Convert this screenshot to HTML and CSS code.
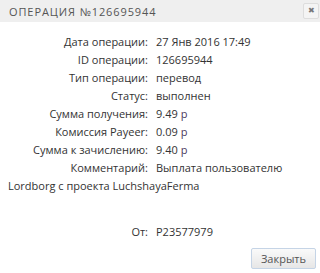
FILE: index.html
```html
<!DOCTYPE html>
<html lang="ru">
<head>
  <meta charset="UTF-8" />
  <title>Операция №126695944</title>
  <link rel="stylesheet" href="styles.css">
</head>
<body>
  <div class="dialog">
    <div class="dialog-head">
      <span class="dialog-title">Операция №126695944</span>
      <button class="dialog-close" title="Закрыть">&#10006;</button>
    </div>

    <div class="dialog-body">
      <div class="row"><span class="label">Дата операции:</span><span class="value">27 Янв 2016 17:49</span></div>
      <div class="row"><span class="label">ID операции:</span><span class="value">126695944</span></div>
      <div class="row"><span class="label">Тип операции:</span><span class="value">перевод</span></div>
      <div class="row"><span class="label">Статус:</span><span class="value">выполнен</span></div>
      <div class="row"><span class="label">Сумма получения:</span><span class="value">9.49 <span class="cur">р</span></span></div>
      <div class="row"><span class="label">Комиссия Payeer:</span><span class="value">0.09 <span class="cur">р</span></span></div>
      <div class="row"><span class="label">Сумма к зачислению:</span><span class="value">9.40 <span class="cur">р</span></span></div>
      <div class="row"><span class="label">Комментарий:</span><span class="value">Выплата пользователю Lordborg с проекта LuchshayaFerma</span></div>
      <div class="row row-from"><span class="label">От:</span><span class="value">P23577979</span></div>
    </div>

    <div class="dialog-foot">
      <button class="btn">Закрыть</button>
    </div>
  </div>
</body>
</html>
```

FILE: styles.css
```css
body {
  margin: 0;
  font-family: "Open Sans", "Liberation Sans", sans-serif;
  font-size: 11px;
  color: #333;
  background: #fff;
}
.dialog {
  width: 320px;
  height: 273px;
  display: flex;
  flex-direction: column;
}
.dialog-head {
  height: 22px;
  background: #efefef;
  display: flex;
  align-items: center;
  justify-content: space-between;
  padding: 0 1px 0 9px;
}
.dialog-title {
  text-transform: uppercase;
  letter-spacing: 0.9px;
  font-size: 11px;
  color: #555;
}
.dialog-close {
  width: 16px;
  height: 16px;
  padding: 0;
  border: 1px solid #ddd;
  border-radius: 2px;
  background: #f4f4f4;
  color: #777;
  font-size: 8px;
  line-height: 14px;
  cursor: pointer;
}
.dialog-body {
  padding: 11px 8px 0 8px;
}
.row {
  line-height: 18px;
}
.label {
  display: inline-block;
  width: 140px;
  text-align: right;
  margin-right: 8px;
}
.value {
  color: #333;
}
.cur {
  color: #4a3a5e;
}
.row-from {
  margin-top: 28px;
}
.dialog-foot {
  margin-top: auto;
  display: flex;
  justify-content: flex-end;
  padding: 0 4px 4px 0;
}
.btn {
  font-family: inherit;
  font-size: 11px;
  color: #555;
  height: 21px;
  padding: 0 9px;
  border: 1px solid #c5d4e6;
  border-radius: 2px;
  background: linear-gradient(#fafafa, #e6e6e6);
  cursor: pointer;
}
```
